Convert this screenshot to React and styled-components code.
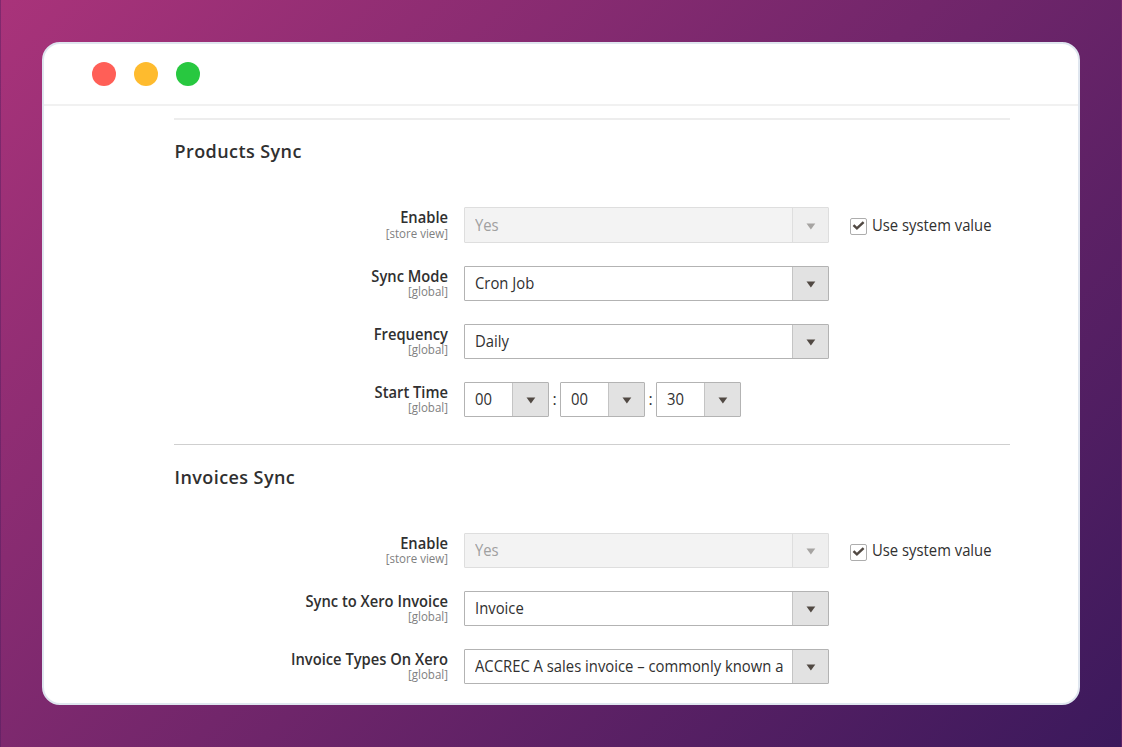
import styled, { createGlobalStyle } from "styled-components";

const GlobalStyle = createGlobalStyle`
  * {
    box-sizing: border-box;
  }
  body {
    margin: 0;
    font-family: "Open Sans", "Noto Sans", sans-serif;
    color: #303030;
  }
`
const Backdrop = styled.div`
  width: 100%;
  height: 747px;
  padding: 42px;
  background:
    linear-gradient(to right, #461a5c66 1px, transparent 1px, transparent calc(100% - 1px), #a0337a4d calc(100% - 1px)),
    linear-gradient(135deg, #a9337a 0%, #3b195c 100%);
`
const Window = styled.main`
  width: 1038px;
  height: 663px;
  border: 2px solid #dfe6ef;
  border-radius: 18px;
  background: #fff;
  overflow: hidden;
`
const TitleBar = styled.header`
  display: flex;
  align-items: center;
  gap: 18px;
  height: 62px;
  padding-left: 48px;
  border-bottom: 2px solid #f1f1f1;
`
const Dot = styled.span`
  width: 24px;
  height: 24px;
  border-radius: 50%;
  background: ${({ $color }) => $color};
`
const Content = styled.div`
  width: 836px;
  margin: 12px 0 0 130px;
`
const Section = styled.section`
  height: 326px;
  border-top: ${({ $first }) => ($first ? "2px solid #ededed" : "1px solid #cfcfcf")};
`
const SectionTitle = styled.h2`
  height: 24px;
  margin: ${({ $first }) => ($first ? "19px 0 44px 0.5px" : "20px 0 44px 0.5px")};
  font-size: 18px;
  line-height: 24px;
  font-weight: 600;
  letter-spacing: 0.42px;
`
const Rows = styled.div`
  display: flex;
  flex-direction: column;
  gap: 23px;
`
const Row = styled.div`
  display: flex;
  height: ${({ $tall }) => ($tall ? "36px" : "35px")};
`
const Label = styled.div`
  width: 274px;
  margin-right: 16px;
  text-align: right;
  white-space: nowrap;
`
const LabelText = styled.div`
  font-size: 16px;
  line-height: 20px;
  font-weight: 600;
  transform: scaleX(0.92);
  transform-origin: right;
`
const Scope = styled.div`
  margin-top: ${({ $tall }) => ($tall ? "0" : "-1px")};
  font-size: 12px;
  line-height: 14px;
  color: #808080;
  transform: scaleX(0.96);
  transform-origin: right;
`
const SelectBox = styled.div`
  display: flex;
  width: ${({ $small }) => ($small ? "85px" : "365px")};
  height: 100%;
  border: 1px solid ${({ $disabled }) => ($disabled ? "#dedede" : "#b3b3b3")};
  border-radius: 1px;
  background: ${({ $disabled }) => ($disabled ? "#f3f3f3" : "#fff")};
  color: ${({ $disabled }) => ($disabled ? "#a0a0a0" : "#303030")};
`
const Value = styled.div`
  display: flex;
  align-items: flex-end;
  flex: 1;
  min-width: 0;
  padding-left: 10px;
`
// the control font is slightly condensed
const ControlText = styled.span`
  flex: none;
  font-size: 16px;
  line-height: ${({ $line }) => $line || "33px"};
  white-space: nowrap;
  transform: scaleX(0.926);
  transform-origin: left;
`
const ArrowCell = styled.span`
  display: flex;
  flex: none;
  align-items: center;
  justify-content: center;
  width: 36px;
  border-left: 1px solid ${({ $disabled }) => ($disabled ? "#dedede" : "#c4c4c4")};
  background: ${({ $disabled }) => ($disabled ? "#efefef" : "#e2e2e2")};
`
const Arrow = styled.svg`
  width: 10px;
  height: 7px;
  margin: 2px 0 0 1px;
  fill: ${({ $disabled }) => ($disabled ? "#a6a4a2" : "#514943")};
`
const Colon = styled.span`
  width: 11px;
  font-size: 16px;
  line-height: 35px;
  text-align: center;
`
const SystemValue = styled.div`
  display: flex;
  align-items: flex-start;
  margin-left: 21px;
`
const CheckBox = styled.span`
  display: flex;
  align-items: center;
  justify-content: center;
  width: 17px;
  height: 17px;
  margin: 11px 5px 0 0;
  border: 1px solid #adadad;
  border-radius: 2px;
`

const Select = ({ value, small, disabled }) => (
  <SelectBox $small={small} $disabled={disabled}>
    <Value>
      <ControlText>{value}</ControlText>
    </Value>
    <ArrowCell $disabled={disabled}>
      <Arrow $disabled={disabled} viewBox="0 0 10 7">
        <path d="M0.5 0.5 H9.3 L4.9 6.6 Z" />
      </Arrow>
    </ArrowCell>
  </SelectBox>
);

const Field = ({ label, scope, tall, children }) => (
  <Row $tall={tall}>
    <Label>
      <LabelText>{label}</LabelText>
      <Scope $tall={tall}>[{scope}]</Scope>
    </Label>
    {children}
  </Row>
);

const UseSystemValue = ({ line }) => (
  <SystemValue>
    <CheckBox>
      <svg width="13" height="11" viewBox="0 0 13 11" fill="none">
        <path d="M1.5 4.2 L4.9 7.4 L11.6 1.2" stroke="#514943" strokeWidth="2.5" />
      </svg>
    </CheckBox>
    <ControlText $line={line}>Use system value</ControlText>
  </SystemValue>
);

const App = () => {
  return (
    <>
      <GlobalStyle />
      <Backdrop>
        <Window>
          <TitleBar>
            <Dot $color="#ff5f57" />
            <Dot $color="#febb2e" />
            <Dot $color="#28c840" />
          </TitleBar>
          <Content>
            <Section $first>
              <SectionTitle $first>Products Sync</SectionTitle>
              <Rows>
                <Field label="Enable" scope="store view" tall>
                  <Select value="Yes" disabled />
                  <UseSystemValue line="36px" />
                </Field>
                <Field label="Sync Mode" scope="global">
                  <Select value="Cron Job" />
                </Field>
                <Field label="Frequency" scope="global">
                  <Select value="Daily" />
                </Field>
                <Field label="Start Time" scope="global">
                  <Select value="00" small />
                  <Colon>:</Colon>
                  <Select value="00" small />
                  <Colon>:</Colon>
                  <Select value="30" small />
                </Field>
              </Rows>
            </Section>
            <Section>
              <SectionTitle>Invoices Sync</SectionTitle>
              <Rows>
                <Field label="Enable" scope="store view">
                  <Select value="Yes" disabled />
                  <UseSystemValue line="35px" />
                </Field>
                <Field label="Sync to Xero Invoice" scope="global">
                  <Select value="Invoice" />
                </Field>
                <Field label="Invoice Types On Xero" scope="global">
                  <Select value="ACCREC A sales invoice – commonly known a" />
                </Field>
              </Rows>
            </Section>
          </Content>
        </Window>
      </Backdrop>
    </>
  );
};

export default App;
